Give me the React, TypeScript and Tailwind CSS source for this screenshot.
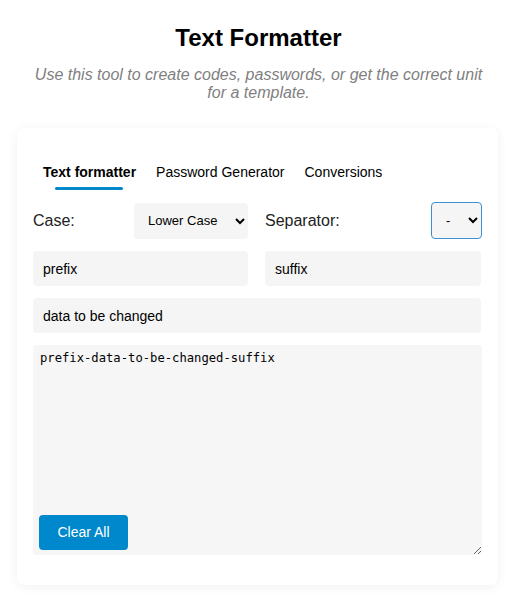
import React from "react";

export default function App() {
  return (
    <div className="min-h-[598px] bg-white pt-[22px] font-['Liberation_Sans',Arial,sans-serif] text-black">
      <h1 className="text-center text-[24px] font-bold leading-[32px]">Text Formatter</h1>
      <p className="mx-auto mt-[12px] max-w-[462px] text-center text-[16px] italic leading-[18px] text-[#808080]">
        Use this tool to create codes, passwords, or get the correct unit for a template.
      </p>
      <div className="ml-[17px] mt-[26px] w-[481px] rounded-[8px] bg-white px-[16px] pb-[30px] pt-[32px] shadow-[0_2px_12px_rgba(0,0,0,0.06)]">
        <div className="flex">
          <div className="relative px-[10px] text-[14px] font-bold leading-[24px]">
            Text formatter
            <div className="mx-auto mt-[3px] h-[3px] w-[68px] -translate-x-[1px] rounded-full bg-[#0088cc]" />
          </div>
          <div className="px-[10px] text-[14px] leading-[24px]">Password Generator</div>
          <div className="px-[10px] text-[14px] leading-[24px]">Conversions</div>
        </div>
        <div className="mt-[12px] grid grid-cols-[215px_1fr] gap-x-[17px] gap-y-[12px]">
          <div className="flex items-center justify-between">
            <span className="text-[16px] text-[#222]">Case:</span>
            <select
              defaultValue="lower"
              className="h-[36px] w-[114px] rounded-[4px] bg-[#f5f5f5] pl-[10px] pr-[4px] text-[13px] text-black outline-none"
            >
              <option value="lower">Lower Case</option>
              <option value="upper">Upper Case</option>
            </select>
          </div>
          <div className="flex items-center justify-between">
            <span className="text-[16px] text-[#222]">Separator:</span>
            <select
              defaultValue="-"
              className="h-[37px] w-[51px] rounded-[4px] border border-[#3d8fd1] bg-[#f5f5f5] pl-[10px] pr-[2px] text-[13px] text-black outline-none"
            >
              <option value="-">-</option>
              <option value="_">_</option>
            </select>
          </div>
          <input
            defaultValue="prefix"
            className="h-[35px] rounded-[4px] bg-[#f5f5f5] px-[10px] text-[14px] text-black outline-none"
          />
          <input
            defaultValue="suffix"
            className="mr-[1px] h-[35px] rounded-[4px] bg-[#f5f5f5] px-[10px] text-[14px] text-black outline-none"
          />
          <input
            defaultValue="data to be changed"
            className="col-span-2 mr-[1px] h-[35px] rounded-[4px] bg-[#f5f5f5] px-[10px] text-[14px] text-black outline-none"
          />
          <div className="relative col-span-2">
            <textarea
              defaultValue="prefix-data-to-be-changed-suffix"
              className="block h-[210px] w-full rounded-[4px] bg-[#f6f6f6] px-[7px] py-[5px] font-['DejaVu_Sans_Mono',monospace] text-[12.2px] leading-[16px] text-black outline-none"
            />
            <button className="absolute bottom-[5px] left-[6px] h-[35px] w-[89px] rounded-[4px] bg-[#0088cc] text-[14px] text-white">
              Clear All
            </button>
          </div>
        </div>
      </div>
    </div>
  );
}
